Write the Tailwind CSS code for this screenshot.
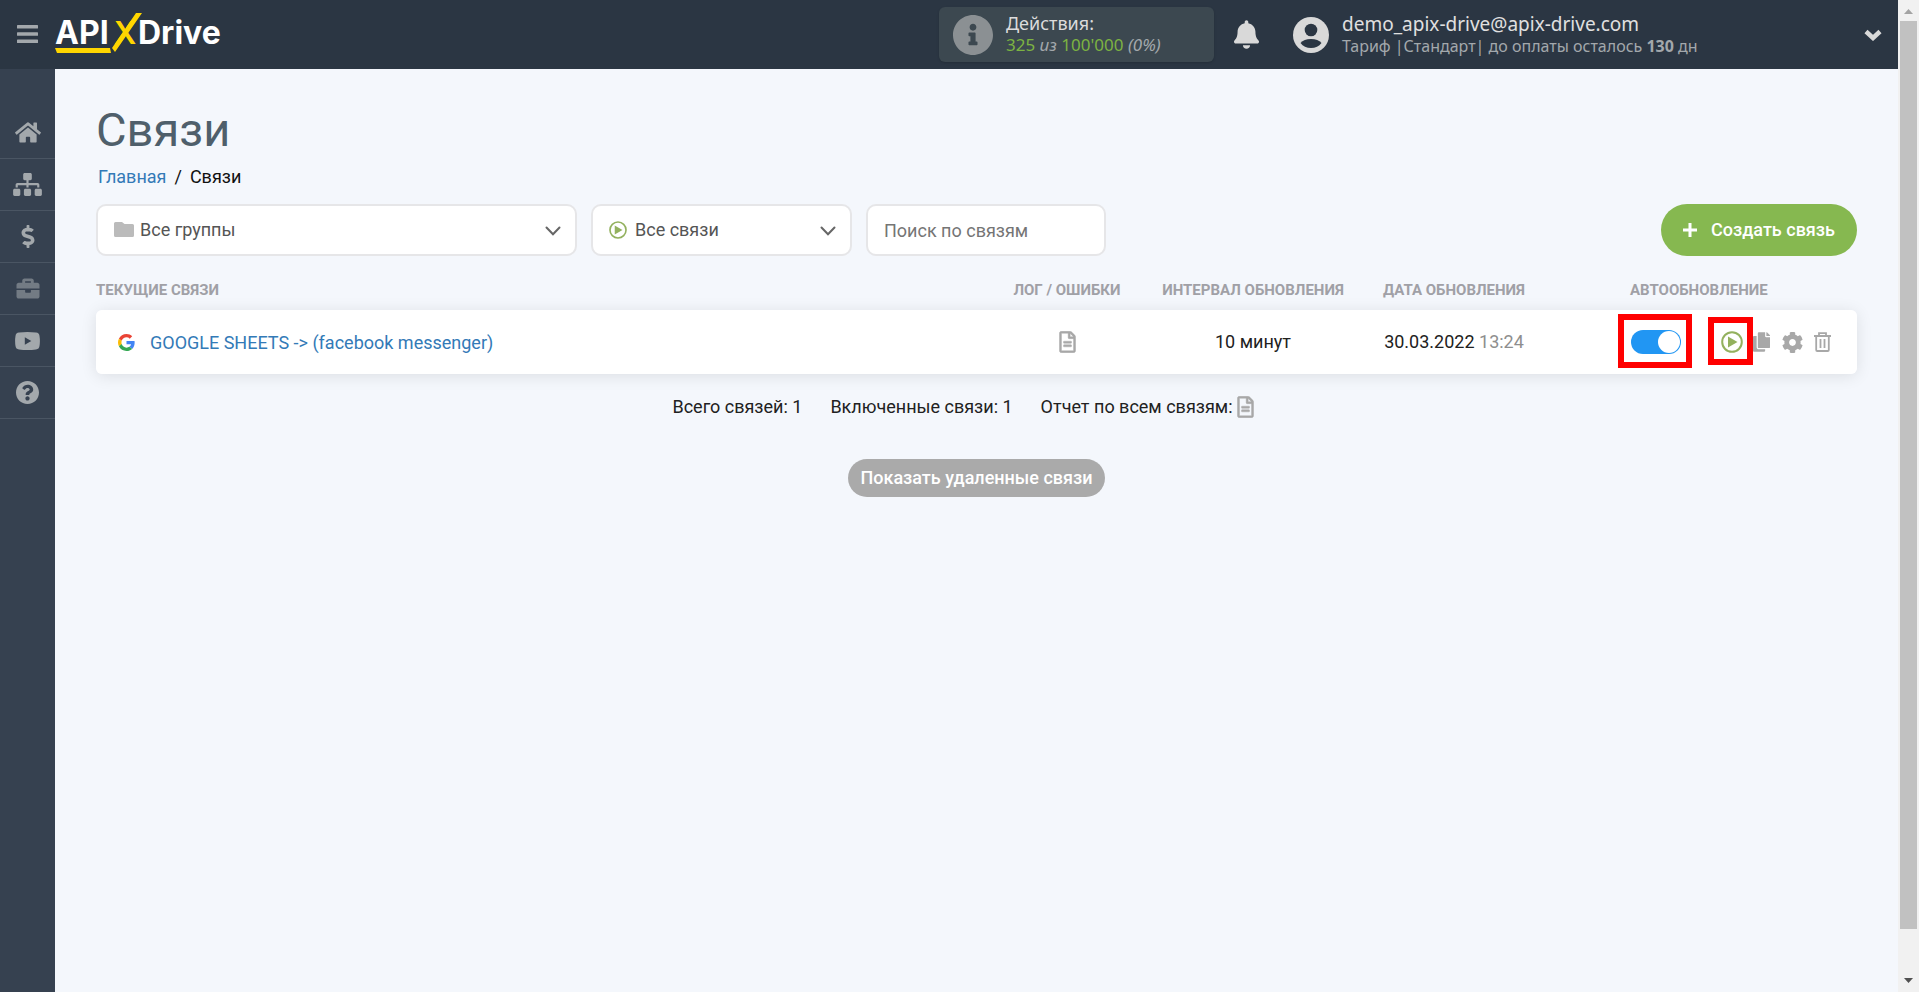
<!DOCTYPE html>
<html lang="ru">
<head>
<meta charset="utf-8">
<meta name="viewport" content="width=device-width, initial-scale=1">
<title>Связи</title>
<script src="https://cdn.jsdelivr.net/npm/@tailwindcss/browser@4"></script>
</head>
<body class="bg-[#f4f7fc] font-['Roboto',sans-serif] text-lg text-[#212121]">
<svg class="hidden" aria-hidden="true">
  <symbol id="play" viewBox="0 0 22 22"><circle cx="11" cy="11" r="9.8" fill="none" stroke="#93b15e" stroke-width="2"/><path d="M7 5.500l9.500 5.500L7 16.500z" fill="#93b15e"/></symbol>
  <symbol id="file" viewBox="-6 -6 396 524"><path fill="currentColor" stroke="currentColor" stroke-width="10" d="M288 248v28c0 6.600-5.400 12-12 12H108c-6.600 0-12-5.400-12-12v-28c0-6.600 5.400-12 12-12h168c6.600 0 12 5.400 12 12zm-12 72H108c-6.600 0-12 5.400-12 12v28c0 6.600 5.400 12 12 12h168c6.600 0 12-5.400 12-12v-28c0-6.600-5.400-12-12-12zm108-188.100V464c0 26.500-21.500 48-48 48H48c-26.500 0-48-21.500-48-48V48C0 21.500 21.500 0 48 0h204.100C264.800 0 277 5.100 286 14.100L369.900 98c9 8.900 14.100 21.200 14.100 33.900zm-128-80V128h76.100L256 51.900zM336 464V176H232c-13.300 0-24-10.700-24-24V48H48v416h288z"/></symbol>
  <symbol id="down" viewBox="0 0 16 10"><path d="M1.500 1.500L8 8.300l6.500-6.800" fill="none" stroke="#666" stroke-width="2" stroke-linecap="round"/></symbol>
</svg>
<div class="flex h-screen">
  <div class="flex min-w-0 flex-1 flex-col">
    <header class="flex h-[69px] shrink-0 items-center bg-[#2b3643] pr-4 font-['Noto_Sans',sans-serif]">
      <button class="flex w-[55px] shrink-0 justify-center pb-0.5" aria-label="Меню">
        <svg class="h-[18px] w-[21px]" viewBox="0 0 21 18" fill="#a3a8ac"><rect width="21" height="3.500" rx=".6"/><rect y="7.300" width="21" height="3.500" rx=".6"/><rect y="14.500" width="21" height="3.500" rx=".6"/></svg>
      </button>
      <a href="#" class="shrink-0" aria-label="APIXDrive">
        <svg class="h-[43px] w-[170px]" viewBox="0 0 170 43" font-family="Inter, sans-serif" font-weight="700" font-size="32">
          <text x="0" y="31" fill="#fff">API</text>
          <text x="59" y="31" fill="#ffd600" font-weight="600" font-size="31">X</text>
          <text x="83" y="31" fill="#fff">Drive</text>
          <path d="M81 0h6L60 39l-3-4zM0 35h55l1 5H2z" fill="#ffd600"/>
        </svg>
      </a>
      <div class="ml-auto flex h-[55px] w-[275px] shrink-0 items-center rounded-md bg-[#3c4850] pl-3.5 shadow-sm">
        <svg class="size-10" viewBox="8 8 496 496" fill="#8b9093"><path d="M256 8C119.043 8 8 119.083 8 256c0 136.997 111.043 248 248 248s248-111.003 248-248C504 119.083 392.957 8 256 8zm0 110c23.196 0 42 18.804 42 42s-18.804 42-42 42-42-18.804-42-42 18.804-42 42-42zm56 254c0 6.627-5.373 12-12 12h-88c-6.627 0-12-5.373-12-12v-24c0-6.627 5.373-12 12-12h12v-64h-12c-6.627 0-12-5.373-12-12v-24c0-6.627 5.373-12 12-12h64c6.627 0 12 5.373 12 12v100h12c6.627 0 12 5.373 12 12v24z"/></svg>
        <div class="ml-[13px] pb-0.5 text-[17px] leading-[22px] text-[#a3a8ac]">
          <div class="text-lg leading-[22px] text-[#dcdcdc]">Действия:</div>
          <div><span class="text-[#7cb342]">325</span> <i>из</i> <span class="text-[#7cb342]">100'000</span> <i>(0%)</i></div>
        </div>
      </div>
      <button class="ml-5 shrink-0" aria-label="Уведомления">
        <svg class="h-[29px] w-[25px]" viewBox="0 0 448 512" fill="#d9d9d9"><path d="M224 512c35.320 0 63.970-28.650 63.970-64H160.030c0 35.350 28.650 64 63.970 64zm215.390-149.710c-19.320-20.760-55.470-51.990-55.470-154.290 0-77.700-54.480-139.900-127.940-155.160V32c0-17.670-14.320-32-31.980-32s-31.980 14.330-31.980 32v20.840C118.560 68.100 64.080 130.300 64.080 208c0 102.300-36.150 133.530-55.470 154.290-6 6.450-8.660 14.160-8.610 21.710.110 16.400 12.980 32 32.100 32h383.800c19.120 0 32-15.600 32.100-32 .050-7.550-2.610-15.270-8.610-21.710z"/></svg>
      </button>
      <button class="ml-[34px] flex w-[589px] items-center text-left" aria-label="Профиль">
        <svg class="size-9 shrink-0" viewBox="0 0 36 36"><circle cx="18" cy="18" r="18" fill="#d9d9d9"/><circle cx="18" cy="13" r="6.300" fill="#2b3643"/><path d="M7.500 26C10 23.200 13 22 18 22s8 1.200 10.500 4c-2.500 3.500-6 5-10.500 5s-8-1.500-10.500-5z" fill="#2b3643"/></svg>
        <span class="ml-[13px] text-[16px] leading-[22px] text-[#a3a8ac]">
          <span class="block text-[19px] leading-[22px] text-[#e0e0e0]">demo_apix-drive@apix-drive.com</span>
          <span class="block">Тариф |Стандарт| до оплаты осталось <b>130</b> дн</span>
        </span>
        <svg class="ml-auto h-3 w-[18px] shrink-0" viewBox="0 0 18 12"><path d="M2 2.500l7 6.500 7-6.500" fill="none" stroke="#d9d9d9" stroke-width="4.500"/></svg>
      </button>
    </header>
    <div class="flex min-h-0 flex-1">
      <nav class="flex w-[55px] shrink-0 flex-col bg-[#364150] pt-[38px]" aria-label="Разделы">
        <a href="#" aria-label="Главная" class="flex h-[52px] items-center justify-center border-b border-[#4a5563]"><svg class="h-[23px] w-[26px]" viewBox="0 0 576 512" fill="#a3a8ac"><path d="M280.370 148.260L96 300.110V464a16 16 0 0 0 16 16l112.060-.290a16 16 0 0 0 15.920-16V368a16 16 0 0 1 16-16h64a16 16 0 0 1 16 16v95.640a16 16 0 0 0 16 16.050L464 480a16 16 0 0 0 16-16V300L295.670 148.260a12.190 12.190 0 0 0-15.300 0zM571.600 251.470L488 182.560V44.050a12 12 0 0 0-12-12h-56a12 12 0 0 0-12 12v72.610L318.470 43a48 48 0 0 0-61 0L4.340 251.470a12 12 0 0 0-1.600 16.900l25.500 31A12 12 0 0 0 45.150 301l235.220-193.740a12.190 12.190 0 0 1 15.300 0L530.900 301a12 12 0 0 0 16.900-1.600l25.500-31a12 12 0 0 0-1.700-16.930z"/></svg></a>
        <a href="#" aria-label="Связи" class="flex h-[52px] items-center justify-center border-b border-[#4a5563]"><svg class="h-[23px] w-[29px]" viewBox="0 0 640 512" fill="#a3a8ac"><path d="M128 352H32c-17.670 0-32 14.330-32 32v96c0 17.670 14.330 32 32 32h96c17.670 0 32-14.330 32-32v-96c0-17.670-14.330-32-32-32zm-24-80h192v48h48v-48h192v48h48v-57.590c0-21.170-17.230-38.410-38.410-38.410H344v-64h40c17.670 0 32-14.330 32-32V32c0-17.670-14.330-32-32-32H256c-17.670 0-32 14.330-32 32v96c0 17.670 14.330 32 32 32h40v64H94.410C73.230 224 56 241.230 56 262.410V320h48v-48zm264 80h-96c-17.670 0-32 14.330-32 32v96c0 17.670 14.330 32 32 32h96c17.670 0 32-14.330 32-32v-96c0-17.670-14.330-32-32-32zm240 0h-96c-17.670 0-32 14.330-32 32v96c0 17.670 14.330 32 32 32h96c17.670 0 32-14.330 32-32v-96c0-17.670-14.330-32-32-32z"/></svg></a>
        <a href="#" aria-label="Оплата" class="flex h-[52px] items-center justify-center border-b border-[#4a5563]"><svg class="h-[23px] w-[14px]" viewBox="0 0 288 512" fill="#a3a8ac"><path d="M209.200 233.400l-108-31.600C88.700 198.200 80 186.500 80 173.500c0-16.300 13.200-29.500 29.500-29.500h66.300c12.200 0 24.200 3.700 34.200 10.500 6.100 4.100 14.300 3.100 19.500-2l34.800-34c7.100-6.900 6.100-18.400-1.800-24.500C238 74.800 207.400 64.100 176 64V16c0-8.800-7.200-16-16-16h-32c-8.800 0-16 7.200-16 16v48h-2.500C45.800 64-5.400 118.700.5 183.600c4.200 46.100 39.400 83.600 83.800 96.600l102.500 30c12.500 3.700 21.200 15.300 21.200 28.300 0 16.300-13.200 29.500-29.500 29.500h-66.300C100 368 88 364.300 78 357.500c-6.100-4.100-14.300-3.100-19.500 2l-34.800 34c-7.100 6.900-6.100 18.400 1.800 24.500 24.500 19.200 55.100 29.900 86.500 30v48c0 8.800 7.200 16 16 16h32c8.800 0 16-7.200 16-16v-48.200c46.600-.9 90.300-28.600 105.700-72.700 21.500-61.600-14.600-124.800-72.500-141.700z"/></svg></a>
        <a href="#" aria-label="Проекты" class="flex h-[52px] items-center justify-center border-b border-[#4a5563]"><svg class="h-[23px] w-6" viewBox="0 0 512 512" fill="#737b84"><path d="M320 336c0 8.840-7.160 16-16 16h-96c-8.840 0-16-7.160-16-16v-48H0v144c0 25.600 22.400 48 48 48h416c25.600 0 48-22.400 48-48V288H320v48zm144-208h-80V80c0-25.600-22.400-48-48-48H176c-25.600 0-48 22.400-48 48v48H48c-25.600 0-48 22.400-48 48v80h512v-80c0-25.600-22.400-48-48-48zm-144 0H192V96h128v32z"/></svg></a>
        <a href="#" aria-label="Видео" class="flex h-[52px] items-center justify-center border-b border-[#4a5563]"><svg class="h-[18px] w-[25px]" viewBox="0 0 25 18"><path d="M4 .6Q12.500-.4 21 .6 24.200.900 24.500 4q.8 5 0 10-.3 3.100-3.500 3.400-8.500 1-17 0Q.8 17.100.5 14q-.8-5 0-10Q.8.900 4 .6z" fill="#a3a8ac"/><path d="M9.800 5.300l6.500 3.700-6.500 3.700z" fill="#364150"/></svg></a>
        <a href="#" aria-label="Помощь" class="flex h-[52px] items-center justify-center border-b border-[#4a5563]"><svg class="size-[23px]" viewBox="8 8 496 496" fill="#a3a8ac"><path d="M504 256c0 136.997-111.043 248-248 248S8 392.997 8 256C8 119.083 119.043 8 256 8s248 111.083 248 248zM262.655 90c-54.497 0-89.255 22.957-116.549 63.758-3.536 5.286-2.353 12.415 2.715 16.258l34.699 26.310c5.205 3.947 12.621 3.008 16.665-2.122 17.864-22.658 30.113-35.797 57.303-35.797 20.429 0 45.698 13.148 45.698 32.958 0 14.976-12.363 22.667-32.534 33.976C247.128 238.528 216 254.941 216 296v4c0 6.627 5.373 12 12 12h56c6.627 0 12-5.373 12-12v-1.333c0-28.462 83.186-29.647 83.186-106.667 0-58.002-60.165-102-116.531-102zM256 338c-25.365 0-46 20.635-46 46 0 25.364 20.635 46 46 46s46-20.636 46-46c0-25.365-20.635-46-46-46z"/></svg></a>
      </nav>
      <main class="min-w-0 flex-1 px-[41px] pt-[31px]">
        <h1 class="text-[47px] leading-[60px] text-[#4f5f6b]">Связи</h1>
        <div class="mt-[5px] flex gap-2 pl-0.5 leading-6 text-[#111111]"><a href="#" class="text-[#337ab7]">Главная</a><span>/</span><span>Связи</span></div>
        <div class="mt-[15px] flex items-center gap-3.5">
          <div class="relative w-[481px]">
            <svg class="pointer-events-none absolute left-[18px] top-[18px] h-[15px] w-5" viewBox="0 0 20 15"><path d="M1.500 0H8l2.500 2H18.500Q20 2 20 3.500v10q0 1.500-1.500 1.500h-17Q0 15 0 13.500v-12Q0 0 1.500 0z" fill="#bbb"/></svg>
            <select aria-label="Группа" class="block h-[52px] w-full appearance-none rounded-[10px] border-2 border-[#e6e6e8] bg-white pl-[42px] text-[#555]"><option>Все группы</option></select>
            <svg class="pointer-events-none absolute right-4 top-[22px] h-2.5 w-4"><use href="#down"/></svg>
          </div>
          <div class="relative w-[261px]">
            <svg class="pointer-events-none absolute left-[18px] top-[17px] size-[18px]"><use href="#play"/></svg>
            <select aria-label="Связи" class="block h-[52px] w-full appearance-none rounded-[10px] border-2 border-[#e6e6e8] bg-white pl-[42px] text-[#555]"><option>Все связи</option></select>
            <svg class="pointer-events-none absolute right-4 top-[22px] h-2.5 w-4"><use href="#down"/></svg>
          </div>
          <input type="text" aria-label="Поиск по связям" placeholder="Поиск по связям" class="h-[52px] w-[240px] rounded-[10px] border-2 border-[#e6e6e8] bg-white px-4 placeholder:text-[#757575]">
          <button class="ml-auto flex h-[52px] w-[196px] items-center justify-center rounded-full bg-[#86b850] font-medium text-white">
            <svg class="mr-3.5 size-3.5" viewBox="0 0 14 14"><path d="M7 0v14M0 7h14" stroke="#fff" stroke-width="3"/></svg>Создать связь
          </button>
        </div>
        <table class="mt-[19px] w-full table-fixed border-separate border-spacing-0">
          <colgroup><col><col class="w-[138px]"><col class="w-[234px]"><col class="w-[168px]"><col class="w-[319px]"></colgroup>
          <thead><tr class="h-[35px] text-[15px] uppercase text-[#a0a0a6]">
            <th scope="col" class="pb-[3px] text-left">Текущие связи</th><th scope="col" class="pb-[3px]">Лог / ошибки</th><th scope="col" class="pb-[3px]">Интервал обновления</th><th scope="col" class="pb-[3px]">Дата обновления</th><th scope="col" class="pb-[3px] pl-[92px] text-left">Автообновление</th>
          </tr></thead>
          <tbody><tr class="h-16 rounded-md text-center shadow-[0_2px_16px_rgba(0,0,0,0.1)]">
            <td class="rounded-l-md bg-white pl-[22px]"><div class="flex items-center gap-[15px]">
              <svg class="size-[17px]" viewBox="0 0 48 48"><path fill="#EA4335" d="M24 9.500c3.540 0 6.710 1.220 9.210 3.600l6.850-6.850C35.900 2.380 30.470 0 24 0 14.620 0 6.510 5.380 2.560 13.220l7.980 6.190C12.430 13.720 17.740 9.500 24 9.500z"/><path fill="#4285F4" d="M46.980 24.550c0-1.570-.150-3.090-.380-4.550H24v9.020h12.940c-.580 2.960-2.260 5.480-4.780 7.180l7.730 6c4.510-4.180 7.090-10.360 7.090-17.650z"/><path fill="#FBBC05" d="M10.530 28.590c-.480-1.450-.760-2.990-.760-4.590s.270-3.140.760-4.590l-7.980-6.190C.920 16.460 0 20.120 0 24c0 3.880.920 7.540 2.560 10.780l7.970-6.190z"/><path fill="#34A853" d="M24 48c6.480 0 11.930-2.130 15.890-5.810l-7.730-6c-2.150 1.450-4.920 2.300-8.160 2.300-6.260 0-11.570-4.220-13.470-9.910l-7.980 6.190C6.510 42.620 14.620 48 24 48z"/></svg>
              <a href="#" class="pt-0.5 text-[#337ab7]">GOOGLE SHEETS -&gt; (facebook messenger)</a></div></td>
            <td class="bg-white"><button class="block mx-auto text-[#a8a8a8]" aria-label="Лог"><svg class="h-[22px] w-[17px]"><use href="#file"/></svg></button></td>
            <td class="bg-white">10 минут</td>
            <td class="bg-white">30.03.2022 <span class="text-[#8e8e8e]">13:24</span></td>
            <td class="rounded-r-md bg-white pl-[93px]"><div class="flex items-center">
              <div class="relative flex">
                <input type="checkbox" role="switch" checked aria-label="Автообновление" class="h-6 w-[50px] appearance-none rounded-full bg-[#2196f3] before:ml-[27px] before:mt-px before:block before:size-[22px] before:rounded-full before:bg-white">
                <span class="pointer-events-none absolute -bottom-3.5 -left-[13px] -right-[11px] -top-4 border-6 border-[#ff0000]"></span>
              </div>
              <div class="relative ml-10 flex">
                <button aria-label="Запустить"><svg class="block size-[22px]"><use href="#play"/></svg></button>
                <span class="pointer-events-none absolute -bottom-3 -left-[13px] -right-2.5 -top-3.5 border-6 border-[#ff0000]"></span>
              </div>
              <button class="ml-2.5" aria-label="Копировать"><svg class="h-5 w-[17px]" viewBox="0 0 448 512" fill="#a8a8a8"><path d="M320 448v40c0 13.255-10.745 24-24 24H24c-13.255 0-24-10.745-24-24V120c0-13.255 10.745-24 24-24h72v296c0 30.879 25.121 56 56 56h168zm0-344V0H152c-13.255 0-24 10.745-24 24v368c0 13.255 10.745 24 24 24h272c13.255 0 24-10.745 24-24V128H344c-13.200 0-24-10.800-24-24zm120.971-31.029L375.029 7.029A24 24 0 0 0 358.059 0H352v96h96v-6.059a24 24 0 0 0-7.029-16.970z"/></svg></button>
              <button class="ml-3" aria-label="Настройки"><svg class="size-[21px]" viewBox="8 8 496 496" fill="#a8a8a8"><path d="M487.400 315.700l-42.600-24.600c4.300-23.200 4.300-47 0-70.200l42.600-24.600c4.900-2.800 7.100-8.600 5.500-14-11.100-35.600-30-67.800-54.700-94.600-3.800-4.100-10-5.100-14.800-2.300L380.800 110c-17.900-15.400-38.500-27.300-60.800-35.100V25.800c0-5.600-3.900-10.500-9.400-11.700-36.700-8.200-74.300-7.800-109.200 0-5.500 1.200-9.400 6.100-9.400 11.700V75c-22.200 7.900-42.800 19.800-60.800 35.100L88.700 85.500c-4.900-2.800-11-1.900-14.800 2.300-24.700 26.700-43.600 58.900-54.700 94.600-1.700 5.400.6 11.200 5.500 14L67.300 221c-4.300 23.200-4.300 47 0 70.200l-42.600 24.600c-4.900 2.800-7.100 8.600-5.500 14 11.100 35.600 30 67.800 54.700 94.600 3.800 4.100 10 5.100 14.800 2.300l42.600-24.600c17.900 15.400 38.500 27.300 60.800 35.100v49.200c0 5.600 3.900 10.500 9.400 11.700 36.700 8.200 74.300 7.800 109.200 0 5.500-1.200 9.400-6.100 9.400-11.700v-49.200c22.200-7.900 42.800-19.800 60.800-35.100l42.600 24.600c4.900 2.800 11 1.900 14.800-2.300 24.700-26.700 43.600-58.900 54.700-94.600 1.500-5.500-.7-11.300-5.600-14.100zM256 336c-44.100 0-80-35.900-80-80s35.900-80 80-80 80 35.900 80 80-35.900 80-80 80z"/></svg></button>
              <button class="ml-[11px]" aria-label="Удалить"><svg class="h-5 w-[17px]" viewBox="0 0 17 20" fill="none" stroke="#a8a8a8" stroke-width="1.800"><path d="M0 4h17M5 4V1.200h7V4M2.200 4v14q0 1 1 1h10.600q1 0 1-1V4M6.500 7v9M10.500 7v9"/></svg></button>
            </div></td>
          </tr></tbody>
        </table>
        <div class="mt-[19px] flex items-center justify-center gap-7 pr-[27px]">
          <span>Всего связей: 1</span><span>Включенные связи: 1</span>
          <span class="flex items-center gap-1">Отчет по всем связям: <button class="text-[#a8a8a8]" aria-label="Отчет"><svg class="h-[22px] w-[17px]"><use href="#file"/></svg></button></span>
        </div>
        <button class="mx-auto mt-[38px] block h-[38px] rounded-full bg-[#aaaaaa] px-3 font-medium text-white">Показать удаленные связи</button>
      </main>
    </div>
  </div>
  <!-- Scroll rail -->
  <div class="flex w-[21px] shrink-0 flex-col items-center bg-[#f1f1f1]" aria-hidden="true">
    <svg class="h-[21px] w-[9px] shrink-0" viewBox="0 0 9 21"><path d="M0 14l4.500-5L9 14z" fill="#a3a3a3"/></svg>
    <div class="w-[17px] flex-1 bg-[#c1c1c1]"></div>
    <svg class="mt-[42px] h-[21px] w-[9px] shrink-0" viewBox="0 0 9 21"><path d="M0 7l4.500 5L9 7z" fill="#505050"/></svg>
  </div>
</div>
</body>
</html>
